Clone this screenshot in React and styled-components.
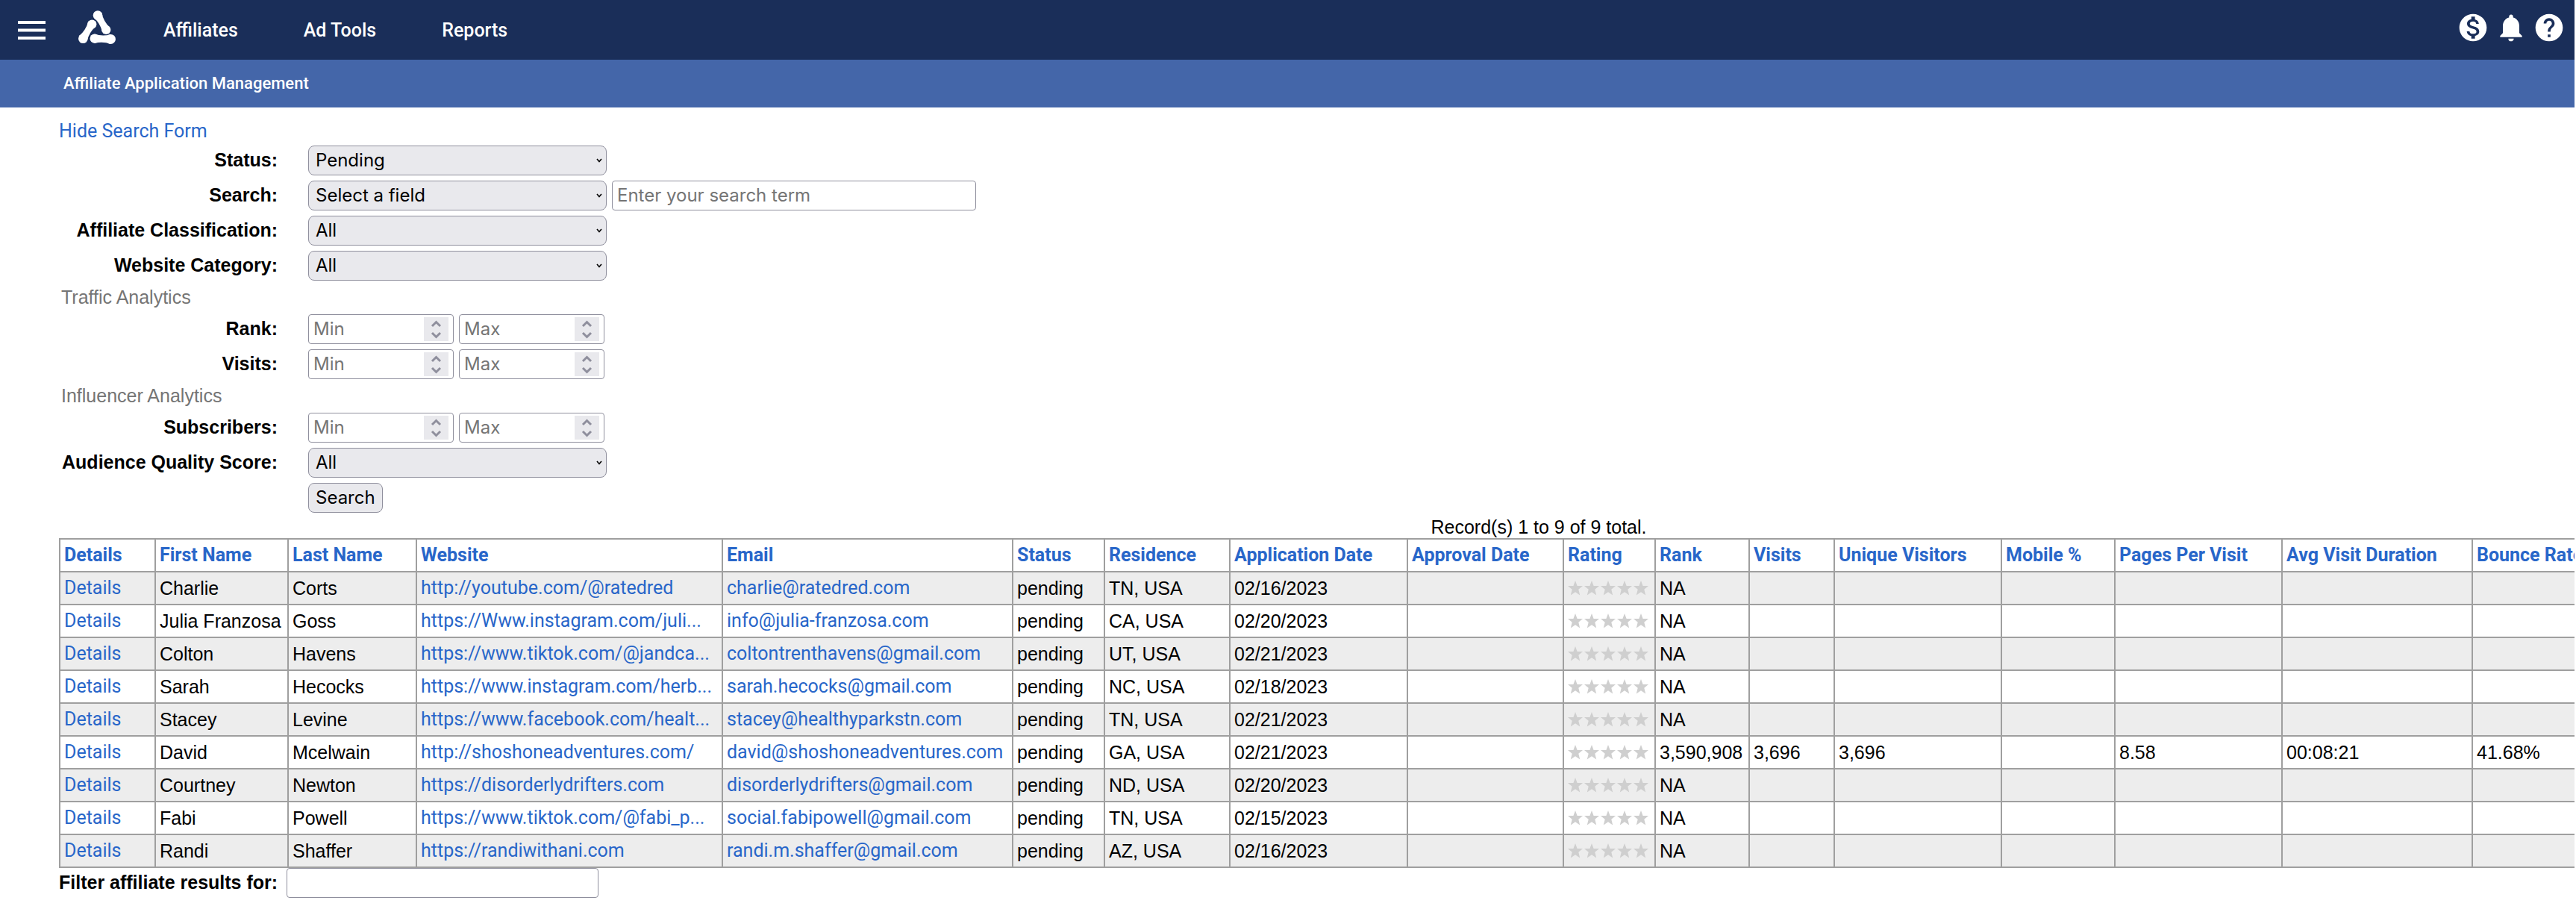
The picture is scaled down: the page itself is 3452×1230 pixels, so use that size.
import React from "react";
import styled, { createGlobalStyle } from "styled-components";
import { MdMonetizationOn, MdNotifications, MdHelp } from "react-icons/md";

const arial = `"Liberation Sans", Arial, sans-serif`;
const roboto = `Roboto, sans-serif`;
const system = `Inter, sans-serif`;

const GlobalStyle = createGlobalStyle`
  * {
    box-sizing: border-box;
  }
  body {
    margin: 0;
    background: #fff;
    color: #000;
    font-family: ${arial};
    font-size: 25px;
    overflow-x: hidden;
  }
`;

const Page = styled.div`
  margin-right: 2px;
  overflow: hidden;
`;

const TopBar = styled.header`
  display: flex;
  align-items: center;
  justify-content: space-between;
  height: 80px;
  padding: 0 12px 6px 24px;
  background: #1a2e59;
`;

const Side = styled.div`
  display: flex;
  align-items: center;
`;

const IconButton = styled.button`
  display: flex;
  padding: 0;
  border: 0;
  background: none;
  color: #fff;
  cursor: pointer;
`;

const Actions = styled(Side)`
  gap: 7px;
`;

const Logo = styled.a`
  display: flex;
  margin-left: 44px;
`;

const Nav = styled.nav`
  display: flex;
  gap: 88px;
  margin-left: 64px;
  padding-top: 7px;
`;

const NavLink = styled.a`
  color: #fff;
  font-family: ${roboto};
  font-weight: 500;
  line-height: 30px;
  text-decoration: none;
`;

const SubBar = styled.div`
  display: flex;
  align-items: center;
  height: 64px;
  padding-left: 85px;
  background: #4466a9;
`;

const Title = styled.h1`
  margin: 0;
  color: #fff;
  font-family: ${roboto};
  font-size: 22px;
  font-weight: 500;
  line-height: 30px;
`;

const Main = styled.main`
  padding: 17px 0 24px 79px;
`;

const TextLink = styled.a`
  display: block;
  width: fit-content;
  color: #2866c9;
  font-family: ${roboto};
  line-height: 30px;
  text-decoration: none;
`;

const Form = styled.form`
  display: grid;
  grid-template-columns: 293px 1fr;
  column-gap: 41px;
  row-gap: 7px;
  margin: 4px 0;
`;

const Label = styled.label`
  font-weight: bold;
  line-height: 38px;
  text-align: right;
  white-space: nowrap;
`;

const Fields = styled.div`
  display: flex;
  gap: 7px;
  grid-column: 2;
`;

const Heading = styled.h2`
  grid-column: 1 / -1;
  margin: 0;
  padding-left: 3px;
  color: #757575;
  font-size: 25px;
  font-weight: normal;
  line-height: 31px;
`;

const SelectBox = styled.div`
  display: grid;
  width: 400px;
  align-items: center;

  & > * {
    grid-area: 1 / 1;
  }
  svg {
    justify-self: end;
    margin-right: 6px;
    pointer-events: none;
  }
`;

const Select = styled.select`
  width: 100%;
  height: 40px;
  padding: 0 9px 2px;
  appearance: none;
  border: 1px solid #8f8f9d;
  border-radius: 8px;
  background: #e9e9ed;
  color: #000;
  font-family: ${system};
  font-size: 24px;
`;

const Input = styled.input`
  width: ${props => props.$width}px;
  height: 40px;
  padding: 0 6px 2px;
  border: 1px solid #8f8f9d;
  border-radius: 4px;
  background: #fff;
  font-family: ${system};
  font-size: 24px;
  appearance: textfield;

  &::placeholder {
    color: #757575;
  }
  &::-webkit-inner-spin-button {
    appearance: none;
  }
`;

const NumberBox = styled.div`
  display: grid;
  align-items: center;

  & > * {
    grid-area: 1 / 1;
  }
  svg {
    justify-self: end;
    margin-right: 7px;
    background: #e9e9ed;
    pointer-events: none;
  }
`;

const Button = styled.button`
  height: 40px;
  padding: 0 9px 2px;
  border: 1px solid #8f8f9d;
  border-radius: 8px;
  background: #e9e9ed;
  color: #000;
  font-family: ${system};
  font-size: 24px;
`;

const Table = styled.table`
  width: 3966px;
  table-layout: fixed;
  border-collapse: collapse;

  caption {
    line-height: 30px;
  }
  th,
  td {
    height: 44px;
    padding: 0 5px;
    border: 2px solid #9f9f9f;
    line-height: 30px;
    text-align: left;
    white-space: nowrap;
  }
  tbody tr:nth-child(odd) {
    background: #ededed;
  }
`;

const Stars = styled.span`
  display: flex;
  gap: 2px;
`;

const FilterRow = styled.div`
  display: flex;
  gap: 12px;
`;

const Chevron = () => (
  <svg width="8" height="6" viewBox="0 0 8 6">
    <path d="M1 1l3 3.5L7 1" fill="none" stroke="#000" strokeWidth="1.6" />
  </svg>
);

const Spinner = () => (
  <svg width="33" height="32" viewBox="0 0 33 32">
    <path
      d="M11 12l5.500-5.500L22 12M11 21l5.500 5.500L22 21"
      fill="none"
      stroke="#8f8f9d"
      strokeWidth="3"
    />
  </svg>
);

const Star = () => (
  <svg width="20" height="20" viewBox="0 0 20 20">
    <path
      d="M10 0L12.600 7H20L14.300 11.800L16.200 19.500L10 15.300L3.800 19.500L5.700 11.800L0 7H7.400Z"
      fill="#cfcfcf"
    />
  </svg>
);

const columns = [
  ["Details", 128],
  ["First Name", 178],
  ["Last Name", 172],
  ["Website", 410],
  ["Email", 389],
  ["Status", 123],
  ["Residence", 168],
  ["Application Date", 238],
  ["Approval Date", 209],
  ["Rating", 123],
  ["Rank", 126],
  ["Visits", 114],
  ["Unique Visitors", 224],
  ["Mobile %", 152],
  ["Pages Per Visit", 224],
  ["Avg Visit Duration", 255],
  ["Bounce Rate"]
];

const rows = [
  ["Charlie", "Corts", "http://youtube.com/@ratedred", "charlie@ratedred.com", "TN, USA", "02/16/2023"],
  ["Julia Franzosa", "Goss", "https://Www.instagram.com/juli...", "info@julia-franzosa.com", "CA, USA", "02/20/2023"],
  ["Colton", "Havens", "https://www.tiktok.com/@jandca...", "coltontrenthavens@gmail.com", "UT, USA", "02/21/2023"],
  ["Sarah", "Hecocks", "https://www.instagram.com/herb...", "sarah.hecocks@gmail.com", "NC, USA", "02/18/2023"],
  ["Stacey", "Levine", "https://www.facebook.com/healt...", "stacey@healthyparkstn.com", "TN, USA", "02/21/2023"],
  ["David", "Mcelwain", "http://shoshoneadventures.com/", "david@shoshoneadventures.com", "GA, USA", "02/21/2023",
    ["3,590,908", "3,696", "3,696", "", "8.58", "00:08:21", "41.68%"]],
  ["Courtney", "Newton", "https://disorderlydrifters.com", "disorderlydrifters@gmail.com", "ND, USA", "02/20/2023"],
  ["Fabi", "Powell", "https://www.tiktok.com/@fabi_p...", "social.fabipowell@gmail.com", "TN, USA", "02/15/2023"],
  ["Randi", "Shaffer", "https://randiwithani.com", "randi.m.shaffer@gmail.com", "AZ, USA", "02/16/2023"]
];

const noTraffic = ["NA", "", "", "", "", "", ""];

const SelectField = ({ id, value }) => (
  <SelectBox>
    <Select id={id} defaultValue={value}>
      <option>{value}</option>
    </Select>
    <Chevron />
  </SelectBox>
);

const SelectRow = ({ id, label, value, children }) => (
  <>
    <Label htmlFor={id}>{label}:</Label>
    <Fields>
      <SelectField id={id} value={value} />
      {children}
    </Fields>
  </>
);

const RangeRow = ({ id, label }) => (
  <>
    <Label htmlFor={id}>{label}:</Label>
    <Fields>
      <NumberBox>
        <Input id={id} type="number" placeholder="Min" $width={195} />
        <Spinner />
      </NumberBox>
      <NumberBox>
        <Input type="number" placeholder="Max" aria-label={`${label} max`} $width={195} />
        <Spinner />
      </NumberBox>
    </Fields>
  </>
);

const Header = () => (
  <TopBar>
    <Side>
      <IconButton aria-label="Menu">
        <svg width="37" height="34" viewBox="0 0 37 34">
          <path d="M0 10h37M0 20.500h37M0 31h37" stroke="#fff" strokeWidth="4" />
        </svg>
      </IconButton>
      <Logo href="#" aria-label="Home">
        <svg width="50" height="46" viewBox="0 0 50 46" fill="#fff">
          <circle cx="26" cy="6.500" r="6.300" />
          <circle cx="37.300" cy="26" r="6.100" />
          <path d="M31.400 3.400Q33.800 15 42.500 23L32.100 29Q29.500 17.500 20.600 9.600Z" />
          <circle cx="18.300" cy="18.500" r="6.100" />
          <circle cx="6.300" cy="37.700" r="6.300" />
          <path d="M23.400 21.500Q14.300 29.300 11.600 41.100L1 34.300Q10 26.700 13.200 15.100Z" />
          <circle cx="21.700" cy="37.700" r="6.200" />
          <circle cx="43.400" cy="38.400" r="6.500" />
          <path d="M21.700 31.500Q32.500 35.200 43.400 31.900V44.900Q32.500 41 21.700 43.900Z" />
        </svg>
      </Logo>
      <Nav>
        <NavLink href="#">Affiliates</NavLink>
        <NavLink href="#">Ad Tools</NavLink>
        <NavLink href="#">Reports</NavLink>
      </Nav>
    </Side>
    <Actions>
      <IconButton aria-label="Payments">
        <MdMonetizationOn size={44} />
      </IconButton>
      <IconButton aria-label="Notifications">
        <MdNotifications size={44} />
      </IconButton>
      <IconButton aria-label="Help">
        <MdHelp size={44} />
      </IconButton>
    </Actions>
  </TopBar>
);

const SearchForm = () => (
  <Form onSubmit={e => e.preventDefault()}>
    <SelectRow id="status" label="Status" value="Pending" />
    <SelectRow id="field" label="Search" value="Select a field">
      <Input type="text" placeholder="Enter your search term" aria-label="Search term" $width={488} />
    </SelectRow>
    <SelectRow id="classification" label="Affiliate Classification" value="All" />
    <SelectRow id="category" label="Website Category" value="All" />
    <Heading>Traffic Analytics</Heading>
    <RangeRow id="rank" label="Rank" />
    <RangeRow id="visits" label="Visits" />
    <Heading>Influencer Analytics</Heading>
    <RangeRow id="subscribers" label="Subscribers" />
    <SelectRow id="quality" label="Audience Quality Score" value="All" />
    <Fields>
      <Button type="submit">Search</Button>
    </Fields>
  </Form>
);

const Rating = () => (
  <Stars>
    {[1, 2, 3, 4, 5].map(n => (
      <Star key={n} />
    ))}
  </Stars>
);

const Results = () => (
  <Table>
    <caption>Record(s) 1 to 9 of 9 total.</caption>
    <colgroup>
      {columns.map(([name, width]) => (
        <col key={name} width={width} />
      ))}
    </colgroup>
    <thead>
      <tr>
        {columns.map(([name]) => (
          <th key={name}>
            <TextLink href="#">{name}</TextLink>
          </th>
        ))}
      </tr>
    </thead>
    <tbody>
      {rows.map(([first, last, site, email, residence, date, traffic = noTraffic]) => (
        <tr key={email}>
          <td>
            <TextLink href="#">Details</TextLink>
          </td>
          <td>{first}</td>
          <td>{last}</td>
          <td>
            <TextLink href="#">{site}</TextLink>
          </td>
          <td>
            <TextLink href="#">{email}</TextLink>
          </td>
          <td>pending</td>
          <td>{residence}</td>
          <td>{date}</td>
          <td></td>
          <td>
            <Rating />
          </td>
          {traffic.map((value, i) => (
            <td key={i}>{value}</td>
          ))}
        </tr>
      ))}
    </tbody>
  </Table>
);

const App = () => (
  <>
    <GlobalStyle />
    <Page>
      <Header />
      <SubBar>
        <Title>Affiliate Application Management</Title>
      </SubBar>
      <Main>
        <TextLink href="#">Hide Search Form</TextLink>
        <SearchForm />
        <Results />
        <FilterRow>
          <Label htmlFor="filter">Filter affiliate results for:</Label>
          <Input id="filter" type="text" $width={418} />
        </FilterRow>
      </Main>
    </Page>
  </>
);

export default App;
